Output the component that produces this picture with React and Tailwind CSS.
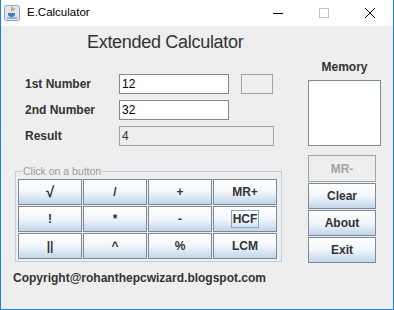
import React from 'react';

const btn =
  'flex items-center justify-center h-[26px] border border-[#7a8a99] bg-gradient-to-b from-white via-[#f1f6fb] to-[#c3d5e8] text-[12px] font-bold text-[#333]';

function JavaIcon() {
  return (
    <svg width="16" height="16" viewBox="0 0 16 16">
      <rect x="0.5" y="0.5" width="15" height="15" rx="2" fill="#dce8f4" stroke="#8aa2bd" />
      <path d="M8 2c1 1.5-1.5 2.5 0 4M10 3c.6 1-1 1.6 0 2.6" stroke="#e07a1f" strokeWidth="1.2" fill="none" />
      <path d="M4 8h7v1.5c0 1.5-1.5 2.5-3.5 2.5S4 11 4 9.5z" fill="#4a7db8" />
      <path d="M3 13h10" stroke="#4a7db8" strokeWidth="1" />
    </svg>
  );
}

function FormRow({ label, children }) {
  return (
    <div className="flex items-center h-[20px]">
      <div className="w-[104px] pl-[10px] text-[12px] font-bold text-[#333]">{label}</div>
      {children}
    </div>
  );
}

export default function App() {
  const keys = ['√', '/', '+', 'MR+', '!', '*', '-', 'HCF', '||', '^', '%', 'LCM'];

  return (
    <div
      className="w-[394px] h-[310px] flex flex-col bg-[#eeeeee] border-x border-b border-[#1883d7] overflow-hidden"
      style={{ fontFamily: '"Liberation Sans", Arial, sans-serif' }}
    >
      {/* title bar */}
      <div className="h-[26px] shrink-0 bg-white flex items-center">
        <div className="ml-[3px]">
          <JavaIcon />
        </div>
        <span className="ml-[7px] text-[11.5px] text-black">E.Calculator</span>
        <div className="ml-auto flex items-center h-full">
          <div className="w-[46px] flex justify-center">
            <div className="w-[10px] h-px bg-black" />
          </div>
          <div className="w-[46px] flex justify-center">
            <div className="w-[10px] h-[10px] border border-[#c4c4c4]" />
          </div>
          <div className="w-[46px] flex justify-center">
            <svg width="10" height="10" viewBox="0 0 10 10">
              <path d="M0 0L10 10M10 0L0 10" stroke="#000" strokeWidth="1" />
            </svg>
          </div>
        </div>
      </div>

      {/* heading */}
      <div className="h-[32px] shrink-0 pl-[86px] pt-[5px] text-[18px] leading-[22px] text-[#333] tracking-[-0.3px]">
        Extended Calculator
      </div>

      <div className="flex pl-[14px]">
        {/* left column */}
        <div className="w-[267px] flex flex-col">
          <div className="mt-[16px] flex flex-col gap-[6px]">
            <FormRow label="1st Number">
              <div className="w-[110px] h-[20px] bg-white border border-[#7a8a99] px-[2px] text-[12px] leading-[18px] text-black">
                12
              </div>
              <div className="ml-[12px] w-[32px] h-[20px] border border-[#a3a3a3]" />
            </FormRow>
            <FormRow label="2nd Number">
              <div className="w-[110px] h-[20px] bg-white border border-[#7a8a99] px-[2px] text-[12px] leading-[18px] text-black">
                32
              </div>
            </FormRow>
            <FormRow label="Result">
              <div className="w-[155px] h-[20px] border border-[#a3a3a3] px-[2px] text-[12px] leading-[18px] text-[#333]">
                4
              </div>
            </FormRow>
          </div>

          <fieldset className="mt-[19px] border border-[#b8cfe5] pl-[2px] pr-[4px] pt-[2px] pb-[2px]">
            <legend className="ml-[4px] px-[1px] text-[10.5px] leading-[12px] text-[#9a9a9a]">
              Click on a button
            </legend>
            <div className="grid grid-cols-[repeat(4,64px)] gap-[1px]">
              {keys.map((k) => (
                <div key={k} className={btn}>
                  {k === 'HCF' ? (
                    <span className="border border-[#8aa6c6] px-[1px] leading-[16px]">HCF</span>
                  ) : (
                    <span className={k === '√' ? 'text-[15px]' : ''}>{k}</span>
                  )}
                </div>
              ))}
            </div>
          </fieldset>
        </div>

        {/* right column */}
        <div className="ml-[26px] w-[73px] flex flex-col">
          <div className="mt-[1px] h-[16px] text-center text-[12px] leading-[16px] font-bold text-[#333]">Memory</div>
          <div className="mt-[5px] h-[66px] bg-white border border-[#7a8a99]" />
          <div className="mt-[9px] flex flex-col gap-[1px] w-[68px]">
            <div className="flex items-center justify-center h-[27px] border border-[#a3a3a3] text-[12px] font-bold text-[#a3a3a3]">
              MR-
            </div>
            <div className={btn}>Clear</div>
            <div className={btn}>About</div>
            <div className={btn}>Exit</div>
          </div>
        </div>
      </div>

      <div className="mt-[7px] pl-[12px] text-[12px] leading-[16px] font-bold text-[#333]">
        Copyright@rohanthepcwizard.blogspot.com
      </div>
    </div>
  );
}
